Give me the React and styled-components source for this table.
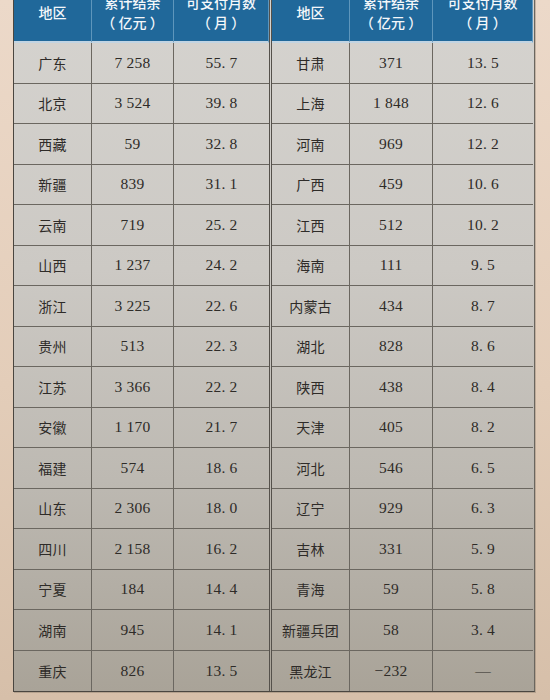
import styled, { createGlobalStyle } from "styled-components"

const GlobalStyle = createGlobalStyle`
  html, body {
    margin: 0;
    padding: 0;
    width: 550px;
    height: 700px;
    overflow: hidden;
    background: linear-gradient(to bottom, #ecd9c9 0%, #e3cdb9 55%, #d6bfa9 100%);
  }
`

const Page = styled.div`
  width: 550px;
  height: 700px;
  padding-left: 13px;
  box-sizing: border-box;
  overflow: hidden;
`

const Sheet = styled.div`
  display: flex;
  width: 520px;
  margin-top: -12px;
  background: linear-gradient(to bottom, #d6d4d0 0%, #ccc9c4 40%, #bdb9b2 70%, #a9a398 100%);
  border-left: 1px solid #4a4640;
  border-right: 1px solid #6a665f;
  border-bottom: 1px solid #4a4640;
  box-shadow: 1px 1px 0 rgba(80, 70, 60, 0.25);
`

const Half = styled.div`
  display: grid;
  grid-template-columns: ${(p) => p.$cols};
  grid-auto-rows: 40.5px;
  grid-template-rows: 55px;
  ${(p) => p.$first && "border-right: 3px double #55514b;"}
`

const HeadCell = styled.div`
  background: #20689a;
  color: #f4f7fa;
  font-family: "Noto Sans CJK SC", "Noto Sans", sans-serif;
  font-size: 14px;
  font-weight: 500;
  line-height: 20px;
  display: flex;
  flex-direction: column;
  align-items: center;
  justify-content: center;
  text-align: center;
  border-right: 1px solid rgba(170, 205, 230, 0.45);
  border-bottom: 2px solid rgba(235, 240, 245, 0.8);
  padding-bottom: 6px;
  box-sizing: border-box;
  &:last-child {
    border-right: none;
  }
`

const Cell = styled.div`
  display: flex;
  align-items: center;
  justify-content: center;
  color: #2e2b28;
  font-family: ${(p) =>
    p.$num
      ? `"Liberation Serif", "DejaVu Serif", serif`
      : `"Noto Sans CJK SC", serif`};
  font-size: ${(p) => (p.$num ? "15.5px" : "14px")};
  border-right: ${(p) => (p.$last ? "none" : "1px solid #6b6760")};
  border-bottom: ${(p) => (p.$end ? "none" : "1px solid #6b6760")};
  box-sizing: border-box;
  letter-spacing: 0.2px;
`

const left = [
  ["广东", "7 258", "55. 7"],
  ["北京", "3 524", "39. 8"],
  ["西藏", "59", "32. 8"],
  ["新疆", "839", "31. 1"],
  ["云南", "719", "25. 2"],
  ["山西", "1 237", "24. 2"],
  ["浙江", "3 225", "22. 6"],
  ["贵州", "513", "22. 3"],
  ["江苏", "3 366", "22. 2"],
  ["安徽", "1 170", "21. 7"],
  ["福建", "574", "18. 6"],
  ["山东", "2 306", "18. 0"],
  ["四川", "2 158", "16. 2"],
  ["宁夏", "184", "14. 4"],
  ["湖南", "945", "14. 1"],
  ["重庆", "826", "13. 5"],
]

const right = [
  ["甘肃", "371", "13. 5"],
  ["上海", "1 848", "12. 6"],
  ["河南", "969", "12. 2"],
  ["广西", "459", "10. 6"],
  ["江西", "512", "10. 2"],
  ["海南", "111", "9. 5"],
  ["内蒙古", "434", "8. 7"],
  ["湖北", "828", "8. 6"],
  ["陕西", "438", "8. 4"],
  ["天津", "405", "8. 2"],
  ["河北", "546", "6. 5"],
  ["辽宁", "929", "6. 3"],
  ["吉林", "331", "5. 9"],
  ["青海", "59", "5. 8"],
  ["新疆兵团", "58", "3. 4"],
  ["黑龙江", "−232", "—"],
]

function Table({ rows, cols, first }) {
  return (
    <Half $cols={cols} $first={first}>
      <HeadCell>地区</HeadCell>
      <HeadCell>
        <span>累计结余</span>
        <span>（ 亿元 ）</span>
      </HeadCell>
      <HeadCell>
        <span>可支付月数</span>
        <span>（ 月 ）</span>
      </HeadCell>
      {rows.map((r, i) => {
        const end = i === rows.length - 1
        return [
          <Cell key={i + "a"} $end={end}>{r[0]}</Cell>,
          <Cell key={i + "b"} $num $end={end}>{r[1]}</Cell>,
          <Cell key={i + "c"} $num $last $end={end}>{r[2]}</Cell>,
        ]
      })}
    </Half>
  )
}

export default function App() {
  return (
    <>
      <GlobalStyle />
      <Page>
        <Sheet>
          <Table rows={left} cols="78px 82px 95px" first />
          <Table rows={right} cols="78px 83px 100px" />
        </Sheet>
      </Page>
    </>
  )
}
